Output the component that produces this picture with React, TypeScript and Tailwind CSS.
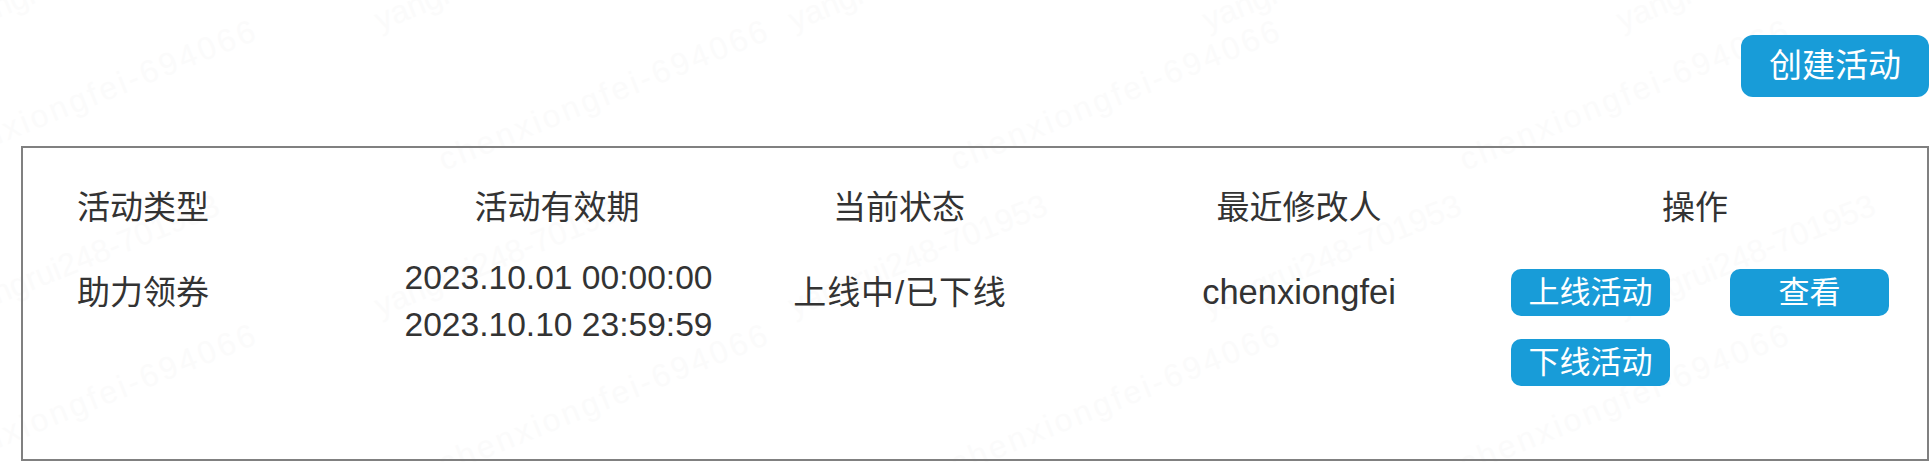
const cols = 'grid grid-cols-[320px_320px_370px_424px_380px] text-center';

const btn = 'flex items-center justify-center bg-[#189cd8] text-white';

const yangrui = [-44, 370, 784, 1198, 1612, 2026];
const chenxiong = [-78, 434, 946, 1455];

function Watermarks() {
  return (
    <div className="pointer-events-none absolute inset-0 overflow-hidden text-[32px] leading-[32px] text-[#fbfbfb]">
      {yangrui.flatMap((x) =>
        [6, 292].map((y) => (
          <span
            key={`y${x}-${y}`}
            className="absolute origin-top-left -rotate-[22deg] whitespace-nowrap"
            style={{ left: x, top: y }}
          >
            yangrui248-701953
          </span>
        ))
      )}
      {chenxiong.flatMap((x) =>
        [146, 450].map((y) => (
          <span
            key={`c${x}-${y}`}
            className="absolute origin-top-left -rotate-[22deg] whitespace-nowrap tracking-[3px]"
            style={{ left: x, top: y }}
          >
            chenxiongfei-694066
          </span>
        ))
      )}
    </div>
  );
}

export default function App() {
  return (
    <div className="relative h-[462px] w-[1932px] overflow-hidden bg-white font-['Liberation_Sans','Noto_Sans_CJK_SC',sans-serif] text-[33px] text-[#333]">
      <Watermarks />
      <div className="relative flex flex-col pl-[21px] pr-[3px] pt-[35px]">
        <div className="flex justify-end">
          <button className={`${btn} h-[62px] w-[188px] rounded-[12px]`}>创建活动</button>
        </div>
        <div className="mt-[49px] h-[315px] border-2 border-[#808080] pl-[54px] pt-[36px] leading-[47px]">
          <div className={cols}>
            <div className="text-left">活动类型</div>
            <div>活动有效期</div>
            <div className="pr-[6px]">当前状态</div>
            <div>最近修改人</div>
            <div className="pr-[12px]">操作</div>
          </div>
          <div className={`${cols} mt-[23px]`}>
            <div className="pt-[15px] text-left">助力领券</div>
            <div className="whitespace-nowrap pl-[3px] text-[33.6px]">
              <div>2023.10.01 00:00:00</div>
              <div>2023.10.10 23:59:59</div>
            </div>
            <div className="pr-[4px] pt-[15px] tracking-[0.9px]">上线中/已下线</div>
            <div className="pt-[15px] text-[34.5px]">chenxiongfei</div>
            <div className="grid grid-cols-[159px_159px] gap-x-[60px] gap-y-[23px] pt-[15px] text-[31px]">
              <button className={`${btn} h-[47px] rounded-[10px]`}>上线活动</button>
              <button className={`${btn} h-[47px] rounded-[10px]`}>查看</button>
              <button className={`${btn} h-[47px] rounded-[10px]`}>下线活动</button>
            </div>
          </div>
        </div>
      </div>
    </div>
  );
}
